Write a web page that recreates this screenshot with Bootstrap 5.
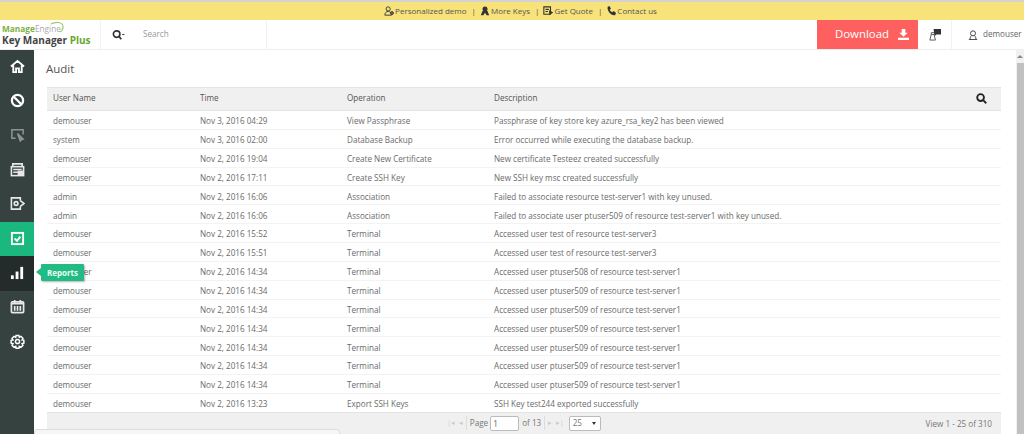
<!DOCTYPE html>
<html lang="en"><head><meta charset="utf-8"><title>Audit</title>
<link rel="stylesheet" href="https://cdn.jsdelivr.net/npm/bootstrap@5.3.0/dist/css/bootstrap.min.css">
<style>
html,body{height:434px;overflow:hidden;}
body{font-family:"Open Sans","Noto Sans",sans-serif;font-size:8.15px;color:#666;background:#fff;}
.promo{height:20px;background:#f8e27a;border-top:2px solid #d3d3d3;color:#555;font-size:8px;padding:0 0 1px 17px;}
.promo svg{width:10px;height:10px;margin-right:1px;}
.promo .sep{margin:0 4px 0 5px;}
.topbar{height:30px;border-bottom:1px solid #eee;}
.logo{width:101px;border-right:1px solid #f2f2f2;padding-left:2px;position:relative;}
.logo-a{font-size:8.3px;line-height:10px;color:#7cb342;font-weight:700;}
.logo-a span{color:#aaa;font-weight:400;}
.logo-b{font-size:10px;line-height:12px;font-weight:700;color:#444;white-space:nowrap;}
.logo-b span{color:#6aa62e;}
.arc{position:absolute;left:50px;top:1px;width:15px;height:12px;}
.finder{width:166px;border-right:1px solid #f2f2f2;padding-left:11px;color:#999;}
.finder svg{width:13px;height:12px;margin-right:18px;}
.dl{width:101px;height:29px;background:#fe5f5f;color:#fff;font-size:11.4px;padding:0 0 1px 18px;}
.dl svg{width:11px;height:11px;margin-left:9px;}
.alerts{width:34px;border-right:1px solid #f2f2f2;}
.alerts svg{width:13px;height:13px;}
.who{width:72px;padding-left:16px;}
.who svg{width:10px;height:10px;margin-right:5px;}
.rail{width:34px;height:384px;background:#364240;flex:none;}
.rail-i{height:34.4px;padding-bottom:2px;}
.rail-i svg{width:15px;height:15px;}
.rail-i.on{background:#1ab77f;}
.rail-i.dark{background:#232c2b;}
.tip{position:absolute;left:41px;top:214px;width:43px;height:17px;background:#22bb85;color:#e8fff5;font-size:8px;font-weight:700;border-radius:1px;box-shadow:1px 1px 2px rgba(0,0,0,.3);z-index:5;}
.tip::before{content:"";position:absolute;left:-5px;top:4px;border:4px solid transparent;border-left:0;border-right:5px solid #22bb85;}
.page-main{width:982px;flex:none;padding:0 15px 0 13px;}
.page-h{font-size:11.5px;color:#555;height:37px;padding-top:10px;margin-left:-1px;}
.audit{table-layout:fixed;width:954px;border-collapse:collapse;}
.audit th{height:23px;background:#f0f0f0;font-weight:400;color:#555;border-top:1px solid #e4e4e4;border-bottom:1px solid #e4e4e4;padding:0 0 1px 6px;}
.audit td{height:18.87px;padding:3px 0 0 6px;border-bottom:1px solid #f3f3f3;color:#6a6a6a;white-space:nowrap;}
.audit tr:last-child td{border-bottom-color:#e4e4e4;}
.pager{height:22px;background:#f0f0f0;color:#777;width:954px;position:relative;padding-bottom:1px;}
.pager .nv{color:#ccc;font-size:7px;}
.pg-in{width:29px;height:15px;border:1px solid #bbb;background:#fff;border-radius:2px;padding:0 2px;font-size:8.15px;color:#666;margin:0 3px 0 2px;}
.pg-sel{width:32px;height:15px;border:1px solid #bbb;background:#fff;border-radius:2px;padding:0 4px 0 3px;margin-left:5px;}
.pg-sel i{display:block;border:2px solid transparent;border-top:3px solid #333;border-bottom:0;}
.pg-view{position:absolute;right:9px;top:5px;}
.rule{width:1px;height:14px;background:#ddd;margin:0 3px;}
.scroll-y{width:8px;flex:none;background:#f1f1f1;height:384px;}
.scroll-y .up{height:13px;padding:5px 0 0 1px;}
.scroll-y .up i{display:block;width:0;border:3px solid transparent;border-top:0;border-bottom:3px solid #888;}
.scroll-y .th{height:371px;background:#c1c1c1;margin-left:1px;}
.shelf{position:absolute;left:34px;top:429px;width:306px;height:8px;border:1px solid #ddd;border-radius:3px;background:#f6f6f6;}
</style></head>
<body>
<div class="promo d-flex align-items-center justify-content-center">
 <svg viewBox="0 0 12 12" fill="none" stroke="#444" stroke-width="1.200"><circle cx="5" cy="3.500" r="2.500"/><path d="M1 11c0-3 2-4.500 4-4.500S9 8 9 11z"/><circle cx="9.500" cy="8.500" r="1.800" fill="#666"/></svg><span>Personalized demo</span><span class="sep">|</span>
 <svg viewBox="0 0 12 12" fill="#333"><circle cx="6" cy="3.500" r="3"/><path d="M1 11l2-5h6l2 5H8L6 8l-2 3z"/></svg><span>More Keys</span><span class="sep">|</span>
 <svg viewBox="0 0 12 12" fill="none" stroke="#333" stroke-width="1.300"><path d="M1 1h8v9H1zM3 4h4M3 6.500h3M8 6l3 2-3 2z"/></svg><span>Get Quote</span><span class="sep">|</span>
 <svg viewBox="0 0 12 12" fill="#333"><path d="M2 1l2-1 2 3-1.500 1.500c.5 1.500 1.500 2.500 3 3L9 6l3 2-1 3c-5 1-10-5-9-10z"/></svg><span>Contact us</span>
</div>
<div class="topbar d-flex">
 <div class="logo d-flex flex-column justify-content-center">
  <svg class="arc" viewBox="0 0 15 12" fill="none" stroke="#9ccc65" stroke-width="1.200"><path d="M1 3C6 0 13 1 13 6c0 2-1 4-3 5"/></svg>
  <div class="logo-a">Manage<span>Engine</span></div>
  <div class="logo-b">Key Manager <span>Plus</span></div>
 </div>
 <div class="finder d-flex align-items-center">
  <svg viewBox="0 0 14 12" fill="none" stroke="#333" stroke-width="1.800"><circle cx="5" cy="5" r="3.500"/><path d="M7.500 7.500L10 10.500"/><path d="M11 5.500h2.500" stroke-width="1"/></svg><span>Search</span>
 </div>
 <div class="flex-grow-1"></div>
 <div class="dl d-flex align-items-center"><span>Download</span><svg viewBox="0 0 12 12" fill="#fff"><path d="M4 0h4v4h2.500L6 8.500 1.500 4H4zM0 9.500h12V12H0z"/></svg></div>
 <div class="alerts d-flex align-items-center justify-content-center"><svg viewBox="0 0 14 14"><path d="M6 1h8v6H9L7 9z" fill="#333"/><path d="M2 13l1.500-6h3L8 13zM3.500 7V5h3" fill="none" stroke="#555"/></svg></div>
 <div class="who d-flex align-items-center"><svg viewBox="0 0 12 12" fill="none" stroke="#444" stroke-width="1.200"><circle cx="6" cy="4" r="3"/><path d="M1 11.500h10M2.500 11c0-2 .5-3 1.500-4M9.500 11c0-2-.5-3-1.500-4"/></svg><span>demouser</span></div>
</div>
<div class="d-flex position-relative">
 <div class="rail d-flex flex-column">
  <div class="rail-i d-flex align-items-center justify-content-center"><svg viewBox="0 0 16 16" fill="none" stroke="#fff" stroke-width="2"><path d="M1 8l7-6 7 6M3.500 7v7h3v-4h3v4h3V7"/></svg></div>
  <div class="rail-i d-flex align-items-center justify-content-center"><svg viewBox="0 0 16 16" fill="none" stroke="#fff" stroke-width="2.400"><circle cx="8" cy="8" r="6"/><path d="M4 4l8 8"/></svg></div>
  <div class="rail-i d-flex align-items-center justify-content-center"><svg viewBox="0 0 16 16" fill="none" stroke="#8b9492" stroke-width="1.600"><path d="M6 12H2V3h12v5"/><path d="M8 7l6 6-2 .5L11 15z" fill="#8b9492"/></svg></div>
  <div class="rail-i d-flex align-items-center justify-content-center"><svg viewBox="0 0 16 16" fill="none" stroke="#e8e8e8" stroke-width="1.700"><path d="M3 5V2h10v3"/><rect x="1.500" y="5" width="13" height="9.500"/><path d="M3.500 8h9M3.500 11h5"/><rect x="9" y="10" width="4" height="3" fill="#e8e8e8"/></svg></div>
  <div class="rail-i d-flex align-items-center justify-content-center"><svg viewBox="0 0 16 16" fill="none" stroke="#e8e8e8" stroke-width="1.700"><path d="M11 5V2H1.500v12H11v-3"/><path d="M11 5l4 3-4 3"/><circle cx="6.500" cy="8" r="2"/></svg></div>
  <div class="rail-i on d-flex align-items-center justify-content-center"><svg viewBox="0 0 16 16" fill="none" stroke="#fff" stroke-width="2"><rect x="2" y="2" width="12" height="12"/><path d="M5 8l2.500 2.500L11 6"/></svg></div>
  <div class="rail-i dark d-flex align-items-center justify-content-center"><svg viewBox="0 0 16 16" fill="#fff"><rect x="1" y="11" width="3" height="4"/><rect x="6" y="7" width="3" height="8"/><rect x="11" y="2" width="3" height="13"/></svg></div>
  <div class="rail-i d-flex align-items-center justify-content-center"><svg viewBox="0 0 16 16" fill="none" stroke="#e8e8e8" stroke-width="1.800"><rect x="1.500" y="3" width="13" height="11.500" rx="1"/><path d="M1.500 5h13M5 1v3M11 1v3M5 7.500v5M8 7.500v5M11 7.500v5"/></svg></div>
  <div class="rail-i d-flex align-items-center justify-content-center"><svg viewBox="0 0 16 16" fill="none" stroke="#fff" stroke-width="1.600"><circle cx="8" cy="8" r="2.200"/><path d="M6.500 1.500h3l.4 2 1.800-1 2.100 2.100-1 1.800 2 .4v3l-2 .4 1 1.800-2.100 2.100-1.800-1-.4 2h-3l-.4-2-1.800 1-2.100-2.100 1-1.800-2-.4v-3l2-.4-1-1.800 2.100-2.100 1.800 1z"/></svg></div>
 </div>
 <div class="page-main">
  <div class="page-h">Audit</div>
  <table class="audit">
   <colgroup><col style="width:147px"><col style="width:147px"><col style="width:147px"><col></colgroup>
   <thead><tr><th>User Name</th><th>Time</th><th>Operation</th><th class="position-relative">Description<svg class="position-absolute" style="right:14px;top:5px;width:11px;height:11px" viewBox="0 0 12 12" fill="none" stroke="#222" stroke-width="2"><circle cx="5" cy="5" r="3.700"/><path d="M8 8l3.200 3.200"/></svg></th></tr></thead>
   <tbody>
    <tr><td>demouser</td><td>Nov 3, 2016 04:29</td><td>View Passphrase</td><td>Passphrase of key store key azure_rsa_key2 has been viewed</td></tr>
    <tr><td>system</td><td>Nov 3, 2016 02:00</td><td>Database Backup</td><td>Error occurred while executing the database backup.</td></tr>
    <tr><td>demouser</td><td>Nov 2, 2016 19:04</td><td>Create New Certificate</td><td>New certificate Testeez created successfully</td></tr>
    <tr><td>demouser</td><td>Nov 2, 2016 17:11</td><td>Create SSH Key</td><td>New SSH key msc created successfully</td></tr>
    <tr><td>admin</td><td>Nov 2, 2016 16:06</td><td>Association</td><td>Failed to associate resource test-server1 with key unused.</td></tr>
    <tr><td>admin</td><td>Nov 2, 2016 16:06</td><td>Association</td><td>Failed to associate user ptuser509 of resource test-server1 with key unused.</td></tr>
    <tr><td>demouser</td><td>Nov 2, 2016 15:52</td><td>Terminal</td><td>Accessed user test of resource test-server3</td></tr>
    <tr><td>demouser</td><td>Nov 2, 2016 15:51</td><td>Terminal</td><td>Accessed user test of resource test-server3</td></tr>
    <tr><td>demouser</td><td>Nov 2, 2016 14:34</td><td>Terminal</td><td>Accessed user ptuser508 of resource test-server1</td></tr>
    <tr><td>demouser</td><td>Nov 2, 2016 14:34</td><td>Terminal</td><td>Accessed user ptuser509 of resource test-server1</td></tr>
    <tr><td>demouser</td><td>Nov 2, 2016 14:34</td><td>Terminal</td><td>Accessed user ptuser509 of resource test-server1</td></tr>
    <tr><td>demouser</td><td>Nov 2, 2016 14:34</td><td>Terminal</td><td>Accessed user ptuser509 of resource test-server1</td></tr>
    <tr><td>demouser</td><td>Nov 2, 2016 14:34</td><td>Terminal</td><td>Accessed user ptuser509 of resource test-server1</td></tr>
    <tr><td>demouser</td><td>Nov 2, 2016 14:34</td><td>Terminal</td><td>Accessed user ptuser509 of resource test-server1</td></tr>
    <tr><td>demouser</td><td>Nov 2, 2016 14:34</td><td>Terminal</td><td>Accessed user ptuser509 of resource test-server1</td></tr>
    <tr><td>demouser</td><td>Nov 2, 2016 13:23</td><td>Export SSH Keys</td><td>SSH Key test244 exported successfully</td></tr>
   </tbody>
  </table>
  <div class="pager d-flex align-items-center justify-content-center">
   <span class="nv">|◂ &nbsp;◂</span><span class="rule"></span><span>Page</span><input class="pg-in" value="1" aria-label="Page"><span>of 13</span><span class="rule"></span><span class="nv">▸ &nbsp;▸|</span>
   <div class="pg-sel d-flex align-items-center justify-content-between"><span>25</span><i></i></div>
   <span class="pg-view">View 1 - 25 of 310</span>
  </div>
 </div>
 <div class="scroll-y"><div class="up"><i></i></div><div class="th"></div></div>
 <div class="tip d-flex align-items-center justify-content-center">Reports</div>
</div>
<div class="shelf"></div>
<script src="https://cdn.jsdelivr.net/npm/bootstrap@5.3.0/dist/js/bootstrap.bundle.min.js"></script>
</body></html>
